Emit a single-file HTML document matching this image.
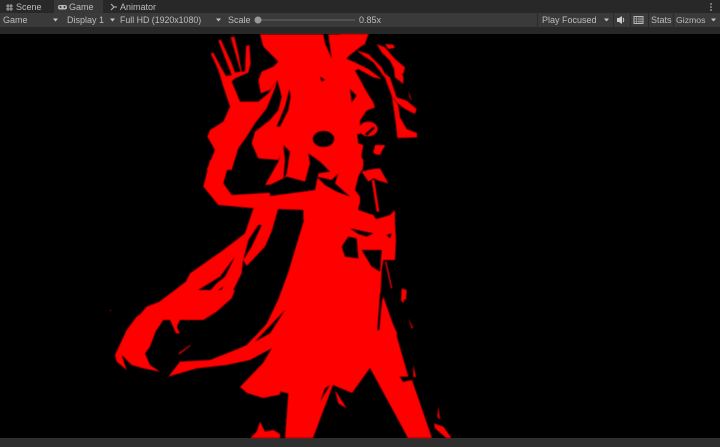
<!DOCTYPE html>
<html><head><meta charset="utf-8"><style>
html,body{margin:0;padding:0;background:#000}
#r{position:relative;width:720px;height:447px;overflow:hidden;background:#000;font-family:"Liberation Sans",sans-serif;font-size:9px;color:#bdbdbd}
#r div.t{position:absolute;white-space:nowrap;line-height:12px;filter:blur(.3px)}
.b{position:absolute}
</style></head><body><div id="r">
<div class="b" style="left:0;top:0;width:720px;height:14px;background:#282828"></div>
<div class="b" style="left:54px;top:0;width:49px;height:14px;background:#383838"></div>
<div class="b" style="left:0;top:13px;width:720px;height:14px;background:#3a3a3a"></div>
<div class="b" style="left:0;top:27px;width:720px;height:7px;background:#282828"></div>
<div class="b" style="left:0;top:438px;width:720px;height:9px;background:#2f2f2f"></div>
<div class="b" style="left:537px;top:13px;width:1px;height:14px;background:#2a2a2a"></div>
<div class="b" style="left:613px;top:13px;width:1px;height:14px;background:#2a2a2a"></div>
<div class="b" style="left:630px;top:13px;width:1px;height:14px;background:#2a2a2a"></div>
<div class="b" style="left:648px;top:13px;width:1px;height:14px;background:#2a2a2a"></div>
<div class="b" style="left:673px;top:13px;width:1px;height:14px;background:#2a2a2a"></div>
<div class="t" style="left:16px;top:1px">Scene</div>
<div class="t" style="left:69px;top:1px">Game</div>
<div class="t" style="left:120px;top:1px">Animator</div>
<div class="t" style="left:3px;top:14px">Game</div>
<div class="t" style="left:67px;top:14px">Display 1</div>
<div class="t" style="left:120px;top:14px;font-size:8.800px">Full HD (1920x1080)</div>
<div class="t" style="left:228px;top:14px">Scale</div>
<div class="t" style="left:359px;top:14px">0.85x</div>
<div class="t" style="left:542px;top:14px">Play Focused</div>
<div class="t" style="left:651px;top:14px">Stats</div>
<div class="t" style="left:676px;top:14px;font-size:8.700px">Gizmos</div>
<svg class="b" style="left:0;top:0" width="720" height="34" viewBox="0 0 720 34">
<g stroke="#aaa" stroke-width="1" fill="none"><path d="M8 4v7M11 4v7M6 6h7M6 9h7"/></g>
<rect x="58" y="5" width="9" height="4.500" rx="2" fill="#bbb"/><circle cx="60.500" cy="7" r="1" fill="#333"/><circle cx="64.500" cy="7" r="1" fill="#333"/>
<path d="M111 4l3 3-3 3M114 7h3" stroke="#bbb" fill="none"/>
<g fill="#ccc"><circle cx="711" cy="4" r=".8"/><circle cx="711" cy="7" r=".8"/><circle cx="711" cy="10" r=".8"/></g>
<g fill="#c4c4c4"><path d="M53 18.500h5l-2.500 3zM110 18.500h5l-2.500 3zM216 18.500h5l-2.500 3zM604 18.500h5l-2.500 3zM711 18.500h5l-2.500 3z"/></g>
<rect x="258" y="19.500" width="97" height="1" fill="#666"/><circle cx="258" cy="20" r="3.500" fill="#999"/>
<path d="M617 18h2l3-2v8l-3-2h-2z" fill="#ccc"/><path d="M623 18c1 1 1 3 0 4" stroke="#ccc" fill="none"/>
<rect x="634" y="16.500" width="9" height="7" fill="none" stroke="#bbb"/><path d="M634 19h9M634 21.500h9M636.500 17v6M639 17v6M641 17v6" stroke="#bbb" stroke-width=".6"/>
</svg>
<svg class="b" style="left:0;top:34px;filter:blur(.4px)" width="720" height="404" viewBox="0 34 720 404">
<defs><clipPath id="c"><rect x="0" y="34" width="720" height="404"/></clipPath></defs>
<g clip-path="url(#c)">
<path fill="#f00" d="M305 205L345 205L383 302L397 333L393 375L400 377L403 382L412 380L432 438L408 438L370 368L352 393L333 385L313 438L282 438L288 393L263 398L247 393L240 387L263 363L272 348L250 345L267 323L278 300L288 273L297 243L305 217Z"/>
<g transform="translate(190,30) scale(.33333)">
<path fill="#f00" d="M62 70L70 68L95 115L108 138L125 135L85 32L92 28L125 100L135 128L152 125L122 22L133 20L145 70L155 125L165 125L168 48L178 45L182 100L175 128L135 145L125 155L140 190L150 215L205 215L235 190L262 150L255 175L230 235L195 280L170 320L145 355L125 420L50 420L75 360L52 320L60 300L100 275L120 230L100 170L85 120Z"/>
<path fill="#f00" d="M210 13L535 13L525 40L480 75L465 90L490 130L480 170L500 205L515 215L520 240L505 260L500 300L505 340L520 345L510 400L520 420L270 420L280 350L265 390L205 385L185 340L195 305L240 270L265 240L275 200L262 150L240 180L212 190L205 150L215 125L250 110L265 95L220 50Z"/>
<path fill="#000" d="M298 178L302 200L295 240L270 290L260 290L285 230ZM400 13L415 13L425 85L405 40ZM390 140L405 150L395 155ZM480 195L495 205L485 220Z"/>
<path fill="#f00" d="M550 360L568 345L585 350L560 375L550 365Z"/>
</g>
<g transform="translate(340,34) scale(.33333)" fill="#f00">
<path d="M0 0L85 0L75 30L30 55L10 70L45 85L85 105L125 135L100 130L55 105L45 110L65 145L75 165L100 205L105 220L80 230L60 260L60 300L0 300Z"/>
<path d="M110 30L135 40L165 75L195 100L190 120L165 110L150 80L125 55ZM135 30L160 32L165 42L145 45ZM50 50L85 60L125 100L150 150L130 125L100 85L70 65ZM130 115L150 130L170 190L200 200L230 225L225 240L195 225L175 210L155 185L140 145ZM160 90L190 125L190 150L165 130ZM205 170L215 200L208 190ZM155 185L175 215L180 250L200 285L231 297L231 310L172 312L165 250Z"/>
<path fill="#000" d="M30 165L50 185L35 205Z"/>
<ellipse cx="85" cy="285" rx="28" ry="22"/>
<path fill="#000" d="M75 300L100 278L105 282L82 305Z"/>
</g>
<g transform="translate(270,140) scale(.33333)">
<path fill="#f00" d="M130 0L240 0L265 35L280 60L280 80L265 110L255 150L270 170L265 210L310 225L320 240L100 240L100 100Z"/>
<path fill="#f00" d="M315 15L345 15L330 45L310 40ZM275 95L320 85L355 130L310 115L295 125ZM305 120L313 120L328 215L320 215ZM-15 135L25 65L45 0L130 0L130 120L60 130Z"/>
</g>
<g transform="translate(190,160) scale(.33333)">
<path fill="#f00" d="M40 80L60 0L120 0L100 70L125 105L380 90L470 105L510 110L510 130L500 150L480 180L345 170L345 150L195 145L85 135Z"/>
<path fill="#f00" d="M190 145L265 145L245 215L225 260L170 318L160 300L100 330L0 400L-30 400L0 340L100 270L165 220Z"/>
<path fill="#000" d="M205 195L215 195L185 260L160 300L175 240Z"/>
<path fill="#f00" d="M530 30L570 25L595 70L560 60L550 40Z"/>
</g>
<g transform="translate(270,140) scale(.33333)" fill="#000">
<path d="M0 135L50 110L105 125L120 70L115 40L150 65L180 95L145 100L135 150L60 160L0 168Z"/>
<path d="M140 110L185 120L205 100L195 130L240 170L200 155L165 135Z"/>
<path d="M40 15L60 35L50 100L40 120L45 60Z"/>
</g>
<ellipse cx="323.500" cy="139" rx="10.700" ry="8" fill="#000"/>
<g transform="translate(110,240) scale(.33333)">
<path fill="#f00" d="M380 0L415 0L400 50L395 100L360 170L330 205L270 240L205 240L200 270L195 240L160 240L140 270L50 270L80 235L110 200L150 185L240 115L330 40Z"/>
<path fill="#000" d="M215 185L240 165L330 110L375 50L345 110L320 130L280 175ZM310 160L340 140L335 148L315 164Z"/>
<path fill="#f00" d="M0 210h3v3h-3z"/>
</g>
<g transform="translate(100,290) scale(.33333)">
<path fill="#f00" d="M350 65L310 90L240 90L230 110L240 130L228 130L210 90L180 90L150 170L135 190L150 225L180 245L130 235L95 225L65 195L80 240L50 215L45 195L80 120L110 80L165 45L225 0L405 0L395 25Z"/>
<path fill="#f00" d="M205 260L240 215L330 210L410 178L440 165L540 60L560 0L600 100L515 175L450 210L380 225L290 235Z"/>
<path fill="#000" d="M465 155L555 60L510 130Z"/>
<path fill="#f00" d="M235 190L270 165L272 167L238 193ZM480 395L495 425L520 420L545 435L545 445L450 445L470 425Z"/>
</g>
<g transform="translate(340,210) scale(.33333)">
<path fill="#f00" d="M0 0L55 0L100 30L150 15L165 0L165 40L168 90L165 150L130 150L125 180L120 290L115 360L0 360Z"/>
<path fill="#f00" d="M125 280L130 260L165 360L205 500L120 500Z"/>
<path fill="#000" d="M25 80L50 85L55 145L15 140L5 110ZM65 120L125 120L120 185L95 170ZM30 55L100 70L80 80L55 72ZM140 75L155 70L150 85ZM120 250L128 250L118 360L112 360Z"/>
<path fill="#f00" d="M135 155L139 155L157 235L153 235ZM185 235L200 240L190 280L183 270Z"/>
</g>
<g transform="translate(280,290) scale(.33333)">
<path fill="#000" d="M150 285L120 335L135 295ZM0 305L25 310L15 445L0 445Z"/>
<path fill="#f00" d="M385 85L400 115L395 115ZM400 225L408 260L400 262ZM368 0L380 0L378 30L370 25ZM475 350L480 390L472 380ZM462 400L490 410L515 445L500 445L465 415ZM165 300L200 355L175 340Z"/>
</g>
</g>
</svg>
</div></body></html>
